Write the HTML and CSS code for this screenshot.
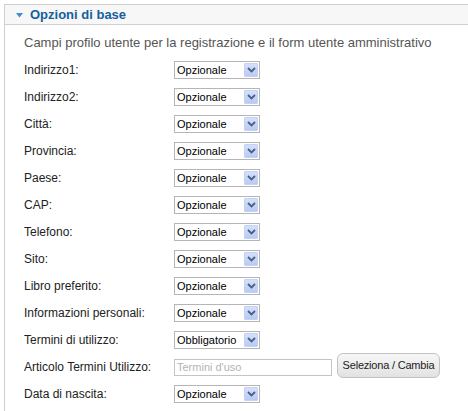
FILE: index.html
```html
<!DOCTYPE html>
<html lang="it">
<head>
<meta charset="utf-8">
<title>Opzioni di base</title>
<link rel="stylesheet" href="styles.css">
</head>
<body>
<div class="panel">
  <div class="panel-head">
    <svg class="caret" width="7" height="5" viewBox="0 0 7 5"><path d="M0 0H7L3.5 4.5Z" fill="#3d8fd1"/></svg>
    <span class="title">Opzioni di base</span>
  </div>
  <div class="panel-body">
    <p class="desc">Campi profilo utente per la registrazione e il form utente amministrativo</p>
    <div class="row"><label class="lbl">Indirizzo1:</label><span class="sel"><select><option>Opzionale</option></select><span class="arrow"><svg width="9" height="6" viewBox="0 0 9 6"><path d="M1 1L4.5 4.5L8 1" fill="none" stroke="#4a5f86" stroke-width="1.8"/></svg></span></span></div>
    <div class="row"><label class="lbl">Indirizzo2:</label><span class="sel"><select><option>Opzionale</option></select><span class="arrow"><svg width="9" height="6" viewBox="0 0 9 6"><path d="M1 1L4.5 4.5L8 1" fill="none" stroke="#4a5f86" stroke-width="1.8"/></svg></span></span></div>
    <div class="row"><label class="lbl">Città:</label><span class="sel"><select><option>Opzionale</option></select><span class="arrow"><svg width="9" height="6" viewBox="0 0 9 6"><path d="M1 1L4.5 4.5L8 1" fill="none" stroke="#4a5f86" stroke-width="1.8"/></svg></span></span></div>
    <div class="row"><label class="lbl">Provincia:</label><span class="sel"><select><option>Opzionale</option></select><span class="arrow"><svg width="9" height="6" viewBox="0 0 9 6"><path d="M1 1L4.5 4.5L8 1" fill="none" stroke="#4a5f86" stroke-width="1.8"/></svg></span></span></div>
    <div class="row"><label class="lbl">Paese:</label><span class="sel"><select><option>Opzionale</option></select><span class="arrow"><svg width="9" height="6" viewBox="0 0 9 6"><path d="M1 1L4.5 4.5L8 1" fill="none" stroke="#4a5f86" stroke-width="1.8"/></svg></span></span></div>
    <div class="row"><label class="lbl">CAP:</label><span class="sel"><select><option>Opzionale</option></select><span class="arrow"><svg width="9" height="6" viewBox="0 0 9 6"><path d="M1 1L4.5 4.5L8 1" fill="none" stroke="#4a5f86" stroke-width="1.8"/></svg></span></span></div>
    <div class="row"><label class="lbl">Telefono:</label><span class="sel"><select><option>Opzionale</option></select><span class="arrow"><svg width="9" height="6" viewBox="0 0 9 6"><path d="M1 1L4.5 4.5L8 1" fill="none" stroke="#4a5f86" stroke-width="1.8"/></svg></span></span></div>
    <div class="row"><label class="lbl">Sito:</label><span class="sel"><select><option>Opzionale</option></select><span class="arrow"><svg width="9" height="6" viewBox="0 0 9 6"><path d="M1 1L4.5 4.5L8 1" fill="none" stroke="#4a5f86" stroke-width="1.8"/></svg></span></span></div>
    <div class="row"><label class="lbl">Libro preferito:</label><span class="sel"><select><option>Opzionale</option></select><span class="arrow"><svg width="9" height="6" viewBox="0 0 9 6"><path d="M1 1L4.5 4.5L8 1" fill="none" stroke="#4a5f86" stroke-width="1.8"/></svg></span></span></div>
    <div class="row"><label class="lbl">Informazioni personali:</label><span class="sel"><select><option>Opzionale</option></select><span class="arrow"><svg width="9" height="6" viewBox="0 0 9 6"><path d="M1 1L4.5 4.5L8 1" fill="none" stroke="#4a5f86" stroke-width="1.8"/></svg></span></span></div>
    <div class="row"><label class="lbl">Termini di utilizzo:</label><span class="sel"><select><option>Obbligatorio</option></select><span class="arrow"><svg width="9" height="6" viewBox="0 0 9 6"><path d="M1 1L4.5 4.5L8 1" fill="none" stroke="#4a5f86" stroke-width="1.8"/></svg></span></span></div>
    <div class="row"><label class="lbl">Articolo Termini Utilizzo:</label><input class="txt" type="text" placeholder="Termini d'uso"><button class="btn" type="button">Seleziona / Cambia</button></div>
    <div class="row"><label class="lbl">Data di nascita:</label><span class="sel"><select><option>Opzionale</option></select><span class="arrow"><svg width="9" height="6" viewBox="0 0 9 6"><path d="M1 1L4.5 4.5L8 1" fill="none" stroke="#4a5f86" stroke-width="1.8"/></svg></span></span></div>
  </div>
</div>
</body>
</html>
```

FILE: styles.css
```css
html, body {
  margin: 0;
  padding: 0;
  background: #fff;
}
body {
  font-family: "Liberation Sans", Arial, sans-serif;
  font-size: 12px;
  color: #222;
}
.panel {
  margin: 4px 0 0 4px;
  border: 1px solid #cfcfcf;
  border-right: none;
  height: 420px;
}
.panel-head {
  display: flex;
  align-items: center;
  height: 19px;
  background: #f7f7f7;
  border-bottom: 1px solid #cfcfcf;
  padding-left: 11px;
}
.caret {
  display: block;
  margin-right: 7px;
  margin-top: 1px;
}
.title {
  font-weight: bold;
  font-size: 13px;
  color: #15609e;
  line-height: 19px;
}
.panel-body {
  padding: 10px 0 0 19px;
}
.desc {
  margin: 0 0 5px;
  line-height: 16px;
  color: #555;
  font-size: 13px;
}
.row {
  display: flex;
  align-items: center;
  height: 27px;
}
.lbl {
  width: 150px;
  flex: none;
  color: #222;
  line-height: 16px;
}
.sel {
  position: relative;
  display: block;
  width: 86px;
  height: 18px;
  margin-top: 1px;
}
.sel select {
  -webkit-appearance: none;
  appearance: none;
  display: block;
  box-sizing: border-box;
  width: 86px;
  height: 18px;
  margin: 0;
  padding: 0 0 0 2px;
  border: 1px solid #b5b5b5;
  border-radius: 0;
  background: #fff;
  font-family: "Liberation Sans", Arial, sans-serif;
  font-size: 11px;
  color: #000;
  outline: none;
}
.arrow {
  position: absolute;
  top: 2px;
  right: 2px;
  width: 14px;
  height: 14px;
  box-sizing: border-box;
  border: 1px solid #c3d2f4;
  border-radius: 1px;
  background: linear-gradient(#d4e0fb, #b9cbf3);
  display: flex;
  align-items: center;
  justify-content: center;
  pointer-events: none;
}
.arrow svg {
  display: block;
}
.txt {
  box-sizing: border-box;
  width: 158px;
  height: 17px;
  margin: 1px 0 0;
  padding: 0 2px;
  border: 1px solid #c4c4c4;
  border-radius: 0;
  font-family: "Liberation Sans", Arial, sans-serif;
  font-size: 11px;
  outline: none;
}
.txt::placeholder {
  color: #b3b3b3;
}
.btn {
  box-sizing: border-box;
  width: 103px;
  height: 25px;
  margin: -3px 0 0 5px;
  padding: 0;
  border: 1px solid #c2c2c2;
  border-radius: 6px;
  background: linear-gradient(#f7f7f7, #e2e2e2);
  font-family: "Liberation Sans", Arial, sans-serif;
  font-size: 11px;
  letter-spacing: -0.2px;
  color: #222;
  white-space: nowrap;
}
```
